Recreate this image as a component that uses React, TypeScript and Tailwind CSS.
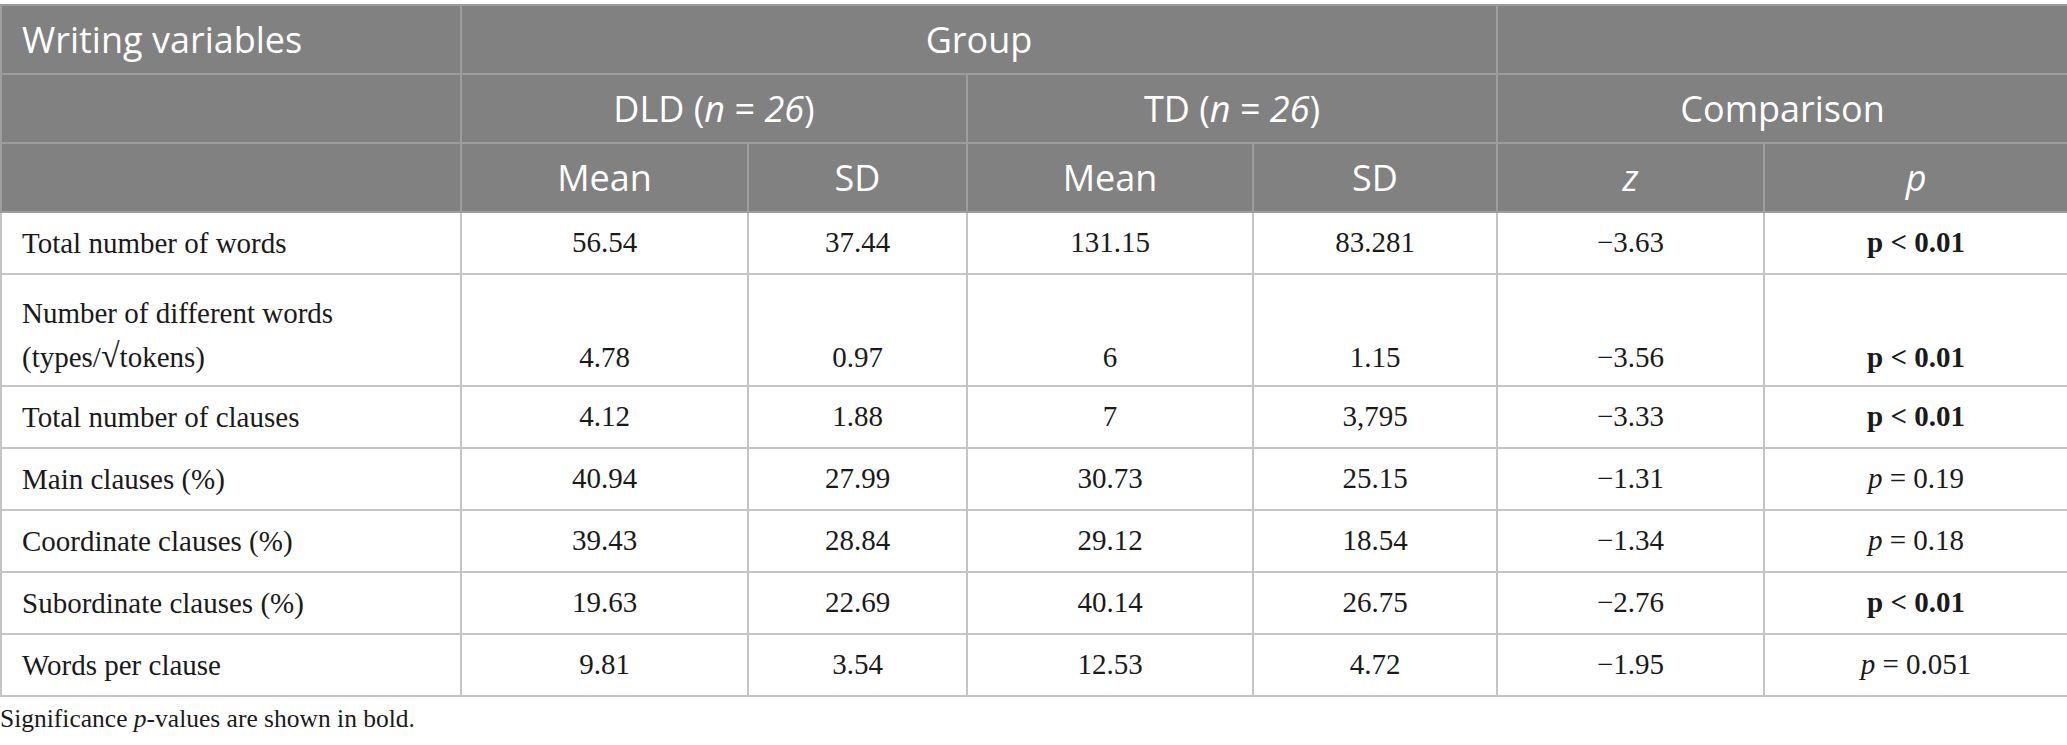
const rows: {
  label: React.ReactNode;
  values: string[];
  p: string;
  sig: boolean;
  tall?: boolean;
}[] = [
  { label: 'Total number of words', values: ['56.54', '37.44', '131.15', '83.281', '−3.63'], p: '0.01', sig: true },
  {
    label: (
      <>
        Number of different words
        <br />
        (types/<span className="text-[34px] leading-none">√</span>tokens)
      </>
    ),
    values: ['4.78', '0.97', '6', '1.15', '−3.56'],
    p: '0.01',
    sig: true,
    tall: true,
  },
  { label: 'Total number of clauses', values: ['4.12', '1.88', '7', '3,795', '−3.33'], p: '0.01', sig: true },
  { label: 'Main clauses (%)', values: ['40.94', '27.99', '30.73', '25.15', '−1.31'], p: '0.19', sig: false },
  { label: 'Coordinate clauses (%)', values: ['39.43', '28.84', '29.12', '18.54', '−1.34'], p: '0.18', sig: false },
  { label: 'Subordinate clauses (%)', values: ['19.63', '22.69', '40.14', '26.75', '−2.76'], p: '0.01', sig: true },
  { label: 'Words per clause', values: ['9.81', '3.54', '12.53', '4.72', '−1.95'], p: '0.051', sig: false },
];

const th = 'border-2 border-[#9c9d9c] h-[69px] p-0 text-center font-normal align-middle';
const td = 'border-2 border-[#c4c4c4] p-0 px-5 text-center';

export default function App() {
  return (
    <div className="w-[2067px] bg-white pt-[4px]">
      <table className="w-[2067px] table-fixed border-collapse">
        <colgroup>
          <col className="w-[460px]" />
          <col className="w-[287px]" />
          <col className="w-[219px]" />
          <col className="w-[286px]" />
          <col className="w-[244px]" />
          <col className="w-[267px]" />
          <col className="w-[304px]" />
        </colgroup>

        {/* Header */}
        <thead className="bg-[#808180] text-white text-[36px] font-['Open_Sans',sans-serif]">
          <tr>
            <th className={`${th} text-left pl-[20px]`}>Writing variables</th>
            <th colSpan={4} className={th}>Group</th>
            <th colSpan={2} className={th} />
          </tr>
          <tr>
            <th className={th} />
            <th colSpan={2} className={th}>
              DLD (<i>n</i> = <i>26</i>)
            </th>
            <th colSpan={2} className={th}>
              TD (<i>n</i> = <i>26</i>)
            </th>
            <th colSpan={2} className={th}>Comparison</th>
          </tr>
          <tr>
            <th className={th} />
            <th className={th}>Mean</th>
            <th className={th}>SD</th>
            <th className={th}>Mean</th>
            <th className={th}>SD</th>
            <th className={th}><i>z</i></th>
            <th className={th}><i>p</i></th>
          </tr>
        </thead>

        {/* Body */}
        <tbody className="text-[29px] text-[#1a1a1a] font-['Liberation_Serif',serif]">
          {rows.map((row, i) => (
            <tr key={i} className={row.tall ? 'h-[112px]' : 'h-[62px]'}>
              <td className={`${td} text-left pl-[20px] leading-[44px] ${row.tall ? 'align-bottom pb-[6px]' : ''}`}>
                {row.label}
              </td>
              {row.values.map((v, j) => (
                <td key={j} className={`${td} ${row.tall ? 'align-bottom pb-[6px] leading-[44px]' : ''}`}>
                  {v}
                </td>
              ))}
              <td className={`${td} ${row.tall ? 'align-bottom pb-[6px] leading-[44px]' : ''}`}>
                {row.sig ? (
                  <b>p &lt; {row.p}</b>
                ) : (
                  <>
                    <i>p</i> = {row.p}
                  </>
                )}
              </td>
            </tr>
          ))}
        </tbody>
      </table>

      {/* Footnote */}
      <p className="pt-[3px] text-[25.5px] text-[#1a1a1a] font-['Liberation_Serif',serif]">
        Significance <i>p</i>-values are shown in bold.
      </p>
    </div>
  );
}
